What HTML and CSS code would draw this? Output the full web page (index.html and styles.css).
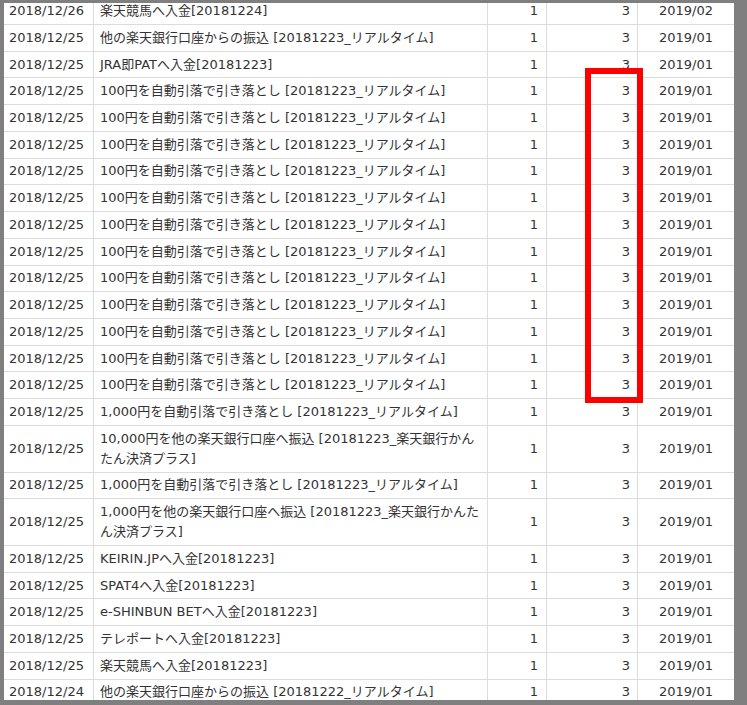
FILE: index.html
```html
<!DOCTYPE html>
<html lang="ja">
<head>
<meta charset="utf-8">
<title>入出金明細</title>
<link rel="stylesheet" href="styles.css">
</head>
<body>
<div class="frame">
  <table class="ledger">
    <colgroup>
      <col class="c-date"><col class="c-desc"><col class="c-n1"><col class="c-n2"><col class="c-month">
    </colgroup>
    <tbody>
      <tr><td class="date">2018/12/26</td><td class="desc">楽天競馬へ入金[20181224]</td><td class="num1">1</td><td class="num2">3</td><td class="month">2019/02</td></tr>
      <tr><td class="date">2018/12/25</td><td class="desc">他の楽天銀行口座からの振込 [20181223_リアルタイム]</td><td class="num1">1</td><td class="num2">3</td><td class="month">2019/01</td></tr>
      <tr><td class="date">2018/12/25</td><td class="desc">JRA即PATへ入金[20181223]</td><td class="num1">1</td><td class="num2">3</td><td class="month">2019/01</td></tr>
      <tr><td class="date">2018/12/25</td><td class="desc">100円を自動引落で引き落とし [20181223_リアルタイム]</td><td class="num1">1</td><td class="num2">3</td><td class="month">2019/01</td></tr>
      <tr><td class="date">2018/12/25</td><td class="desc">100円を自動引落で引き落とし [20181223_リアルタイム]</td><td class="num1">1</td><td class="num2">3</td><td class="month">2019/01</td></tr>
      <tr><td class="date">2018/12/25</td><td class="desc">100円を自動引落で引き落とし [20181223_リアルタイム]</td><td class="num1">1</td><td class="num2">3</td><td class="month">2019/01</td></tr>
      <tr><td class="date">2018/12/25</td><td class="desc">100円を自動引落で引き落とし [20181223_リアルタイム]</td><td class="num1">1</td><td class="num2">3</td><td class="month">2019/01</td></tr>
      <tr><td class="date">2018/12/25</td><td class="desc">100円を自動引落で引き落とし [20181223_リアルタイム]</td><td class="num1">1</td><td class="num2">3</td><td class="month">2019/01</td></tr>
      <tr><td class="date">2018/12/25</td><td class="desc">100円を自動引落で引き落とし [20181223_リアルタイム]</td><td class="num1">1</td><td class="num2">3</td><td class="month">2019/01</td></tr>
      <tr><td class="date">2018/12/25</td><td class="desc">100円を自動引落で引き落とし [20181223_リアルタイム]</td><td class="num1">1</td><td class="num2">3</td><td class="month">2019/01</td></tr>
      <tr><td class="date">2018/12/25</td><td class="desc">100円を自動引落で引き落とし [20181223_リアルタイム]</td><td class="num1">1</td><td class="num2">3</td><td class="month">2019/01</td></tr>
      <tr><td class="date">2018/12/25</td><td class="desc">100円を自動引落で引き落とし [20181223_リアルタイム]</td><td class="num1">1</td><td class="num2">3</td><td class="month">2019/01</td></tr>
      <tr><td class="date">2018/12/25</td><td class="desc">100円を自動引落で引き落とし [20181223_リアルタイム]</td><td class="num1">1</td><td class="num2">3</td><td class="month">2019/01</td></tr>
      <tr><td class="date">2018/12/25</td><td class="desc">100円を自動引落で引き落とし [20181223_リアルタイム]</td><td class="num1">1</td><td class="num2">3</td><td class="month">2019/01</td></tr>
      <tr><td class="date">2018/12/25</td><td class="desc">100円を自動引落で引き落とし [20181223_リアルタイム]</td><td class="num1">1</td><td class="num2">3</td><td class="month">2019/01</td></tr>
      <tr><td class="date">2018/12/25</td><td class="desc">1,000円を自動引落で引き落とし [20181223_リアルタイム]</td><td class="num1">1</td><td class="num2">3</td><td class="month">2019/01</td></tr>
      <tr><td class="date">2018/12/25</td><td class="desc">10,000円を他の楽天銀行口座へ振込 [20181223_楽天銀行かんたん決済プラス]</td><td class="num1">1</td><td class="num2">3</td><td class="month">2019/01</td></tr>
      <tr><td class="date">2018/12/25</td><td class="desc">1,000円を自動引落で引き落とし [20181223_リアルタイム]</td><td class="num1">1</td><td class="num2">3</td><td class="month">2019/01</td></tr>
      <tr><td class="date">2018/12/25</td><td class="desc">1,000円を他の楽天銀行口座へ振込 [20181223_楽天銀行かんたん決済プラス]</td><td class="num1">1</td><td class="num2">3</td><td class="month">2019/01</td></tr>
      <tr><td class="date">2018/12/25</td><td class="desc">KEIRIN.JPへ入金[20181223]</td><td class="num1">1</td><td class="num2">3</td><td class="month">2019/01</td></tr>
      <tr><td class="date">2018/12/25</td><td class="desc">SPAT4へ入金[20181223]</td><td class="num1">1</td><td class="num2">3</td><td class="month">2019/01</td></tr>
      <tr><td class="date">2018/12/25</td><td class="desc">e-SHINBUN BETへ入金[20181223]</td><td class="num1">1</td><td class="num2">3</td><td class="month">2019/01</td></tr>
      <tr><td class="date">2018/12/25</td><td class="desc">テレポートへ入金[20181223]</td><td class="num1">1</td><td class="num2">3</td><td class="month">2019/01</td></tr>
      <tr><td class="date">2018/12/25</td><td class="desc">楽天競馬へ入金[20181223]</td><td class="num1">1</td><td class="num2">3</td><td class="month">2019/01</td></tr>
      <tr><td class="date">2018/12/24</td><td class="desc">他の楽天銀行口座からの振込 [20181222_リアルタイム]</td><td class="num1">1</td><td class="num2">3</td><td class="month">2019/01</td></tr>
    </tbody>
  </table>
</div>
<div class="highlight"></div>
</body>
</html>
```

FILE: styles.css
```css
html, body {
  margin: 0;
  padding: 0;
}

body {
  width: 747px;
  height: 705px;
  background: #7f7f7f;
  overflow: hidden;
  position: relative;
  font-family: "DejaVu Sans", "Noto Sans CJK JP", sans-serif;
  font-size: 13px;
  color: #333333;
}

.frame {
  margin: 3px 13px 0 4px;
  height: 697px;
  background: #ffffff;
  overflow: hidden;
}

.ledger {
  border-collapse: collapse;
  table-layout: fixed;
  width: 731px;
  margin-top: -5.7px;
  margin-left: -1px;
}

.c-date { width: 90px; }
.c-desc { width: 394px; }
.c-n1 { width: 59px; }
.c-n2 { width: 91px; }
.c-month { width: 97px; }

.ledger td {
  border: 1px solid #dcdcdc;
  padding: 2.87px 6px;
  line-height: 20px;
  vertical-align: middle;
  white-space: normal;
}

.ledger td.date {
  padding-left: 5px;
  white-space: nowrap;
}

.ledger td.num1 {
  text-align: right;
  padding-right: 8px;
}

.ledger td.num2 {
  text-align: right;
  padding-right: 7px;
}

.ledger td.month {
  text-align: center;
}

.highlight {
  position: absolute;
  left: 585px;
  top: 68px;
  width: 58px;
  height: 335px;
  box-sizing: border-box;
  border: 6px solid #ff0000;
}
```
